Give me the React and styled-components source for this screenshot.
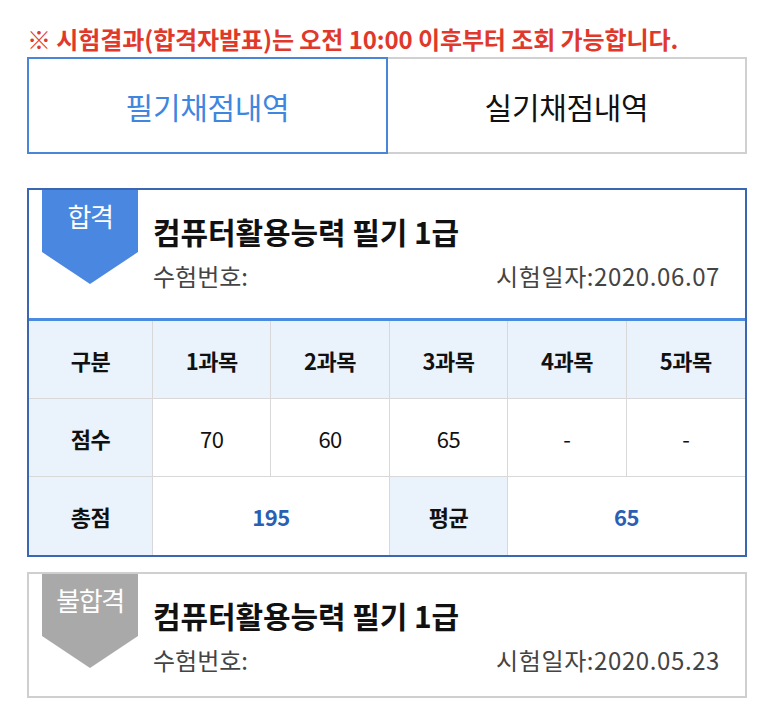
import React from "react";
import styled, { createGlobalStyle } from "styled-components";

const Global = createGlobalStyle`
  * { box-sizing: border-box; }
  html, body { margin: 0; padding: 0; background: #fff; }
  body { font-family: "Noto Sans CJK KR", "Noto Sans", sans-serif; color: #111; }
`;

const Page = styled.div`
  width: 773px;
  padding: 23px 26px 0 27px;
  display: flex;
  flex-direction: column;
`;

const Notice = styled.p`
  margin: 0;
  color: #e0392b;
  font-size: 24px;
  font-weight: 700;
  letter-spacing: -0.1px;
  line-height: 32px;
  height: 34px;
  white-space: nowrap;
`;

const Tabs = styled.div`
  display: flex;
  height: 97px;
`;

const Tab = styled.button`
  flex: 1;
  border: 2px solid ${(p) => (p.$active ? "#4a86d8" : "#d0d0d0")};
  ${(p) => (p.$active ? "" : "border-left: none;")}
  background: #fff;
  color: ${(p) => (p.$active ? "#3f86e0" : "#111")};
  font-family: inherit;
  font-size: 30px;
  font-weight: 400;
  letter-spacing: -0.3px;
  padding: 0;
  display: flex;
  align-items: center;
  justify-content: center;
`;

const Card = styled.section`
  margin-top: ${(p) => p.$mt}px;
  border: 2px solid ${(p) => (p.$pass ? "#3b67b2" : "#cfcfcf")};
  display: flex;
  flex-direction: column;
`;

const Header = styled.div`
  display: flex;
  align-items: flex-start;
  padding-left: 13px;
  height: ${(p) => p.$h}px;
  ${(p) => (p.$line ? "border-bottom: 3px solid #4a8be0;" : "")}
`;

const Badge = styled.div`
  width: 96px;
  height: 94px;
  flex: none;
  background: ${(p) => (p.$pass ? "#4a87e0" : "#a9a9a9")};
  clip-path: polygon(0 0, 100% 0, 100% 66%, 50% 100%, 0 66%);
  color: #fff;
  font-size: 26px;
  letter-spacing: -1.5px;
  text-align: center;
  line-height: 30px;
  padding-top: 11px;
`;

const Info = styled.div`
  flex: 1;
  display: flex;
  flex-direction: column;
  padding: 21px 25px 0 15px;
`;

const Title = styled.h2`
  margin: 0;
  font-size: 30px;
  font-weight: 700;
  letter-spacing: -0.1px;
  line-height: 40px;
  color: #111;
`;

const Meta = styled.div`
  display: flex;
  justify-content: space-between;
  margin-top: 8px;
  font-size: 24px;
  line-height: 34px;
  color: #444;
`;

const DateText = styled.span`
  letter-spacing: 0.6px;
`;

const Table = styled.div`
  display: grid;
  grid-template-columns: 124px repeat(5, 1fr);
  grid-auto-rows: 78px;
`;

const Cell = styled.div`
  grid-column: span ${(p) => p.$span || 1};
  display: flex;
  align-items: center;
  justify-content: center;
  background: ${(p) => (p.$head ? "#eaf2fc" : "#fff")};
  border-right: ${(p) => (p.$lastCol ? "none" : "1px solid #d8d8d8")};
  border-bottom: ${(p) => (p.$lastRow ? "none" : "1px solid #d8d8d8")};
  font-size: 22px;
  font-weight: ${(p) => (p.$bold ? 700 : 400)};
  letter-spacing: -0.5px;
  color: ${(p) => (p.$blue ? "#2b5fb3" : "#111")};
`;

const subjects = ["1과목", "2과목", "3과목", "4과목", "5과목"];
const scores = ["70", "60", "65", "-", "-"];

export default function App() {
  return (
    <Page>
      <Global />
      <Notice>※ 시험결과(합격자발표)는 오전 10:00 이후부터 조회 가능합니다.</Notice>
      <Tabs>
        <Tab $active>필기채점내역</Tab>
        <Tab>실기채점내역</Tab>
      </Tabs>

      <Card $pass $mt={34}>
        <Header $h={131} $line>
          <Badge $pass>합격</Badge>
          <Info>
            <Title>컴퓨터활용능력 필기 1급</Title>
            <Meta>
              <span>수험번호:</span>
              <DateText>시험일자:2020.06.07</DateText>
            </Meta>
          </Info>
        </Header>
        <Table>
          <Cell $head $bold>구분</Cell>
          {subjects.map((s, i) => (
            <Cell key={s} $head $bold $lastCol={i === 4}>{s}</Cell>
          ))}
          <Cell $head $bold>점수</Cell>
          {scores.map((s, i) => (
            <Cell key={i} $lastCol={i === 4}>{s}</Cell>
          ))}
          <Cell $head $bold $lastRow>총점</Cell>
          <Cell $span={2} $bold $blue $lastRow>195</Cell>
          <Cell $head $bold $lastRow>평균</Cell>
          <Cell $span={2} $bold $blue $lastRow $lastCol>65</Cell>
        </Table>
      </Card>

      <Card $mt={15}>
        <Header $h={122}>
          <Badge>불합격</Badge>
          <Info>
            <Title>컴퓨터활용능력 필기 1급</Title>
            <Meta>
              <span>수험번호:</span>
              <DateText>시험일자:2020.05.23</DateText>
            </Meta>
          </Info>
        </Header>
      </Card>
    </Page>
  );
}
